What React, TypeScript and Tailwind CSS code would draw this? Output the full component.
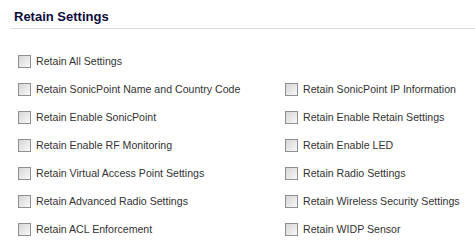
const leftItems = [
  "Retain SonicPoint Name and Country Code",
  "Retain Enable SonicPoint",
  "Retain Enable RF Monitoring",
  "Retain Virtual Access Point Settings",
  "Retain Advanced Radio Settings",
  "Retain ACL Enforcement",
];

const rightItems = [
  "Retain SonicPoint IP Information",
  "Retain Enable Retain Settings",
  "Retain Enable LED",
  "Retain Radio Settings",
  "Retain Wireless Security Settings",
  "Retain WIDP Sensor",
];

function Check({ label }: { label: string }) {
  return (
    <label className="flex items-center h-[28px] gap-[5px]">
      <span className="w-[13px] h-[13px] border border-[#8f8f8f] bg-gradient-to-br from-[#d6d6d6] to-[#f8f8f8] shrink-0" />
      <span className="text-[10.6px] text-[#333333] whitespace-nowrap mt-[1px]">{label}</span>
    </label>
  );
}

export default function App() {
  return (
    <div className="w-[475px] h-[243px] bg-white font-['Liberation_Sans',Arial,sans-serif] overflow-hidden">
      {/* Titre */}
      <div className="pl-[10px] pt-[9px]">
        <div className="pl-[4px] pb-[4px] text-[13px] leading-[15px] font-bold text-[#0b0b3b] border-b border-[#dddddd]">
          Retain Settings
        </div>
      </div>

      {/* Cases à cocher */}
      <div className="pl-[18px] pt-[18px]">
        <Check label="Retain All Settings" />
        <div className="grid grid-cols-[267px_1fr]">
          {leftItems.map((item, i) => (
            <div key={i} className="contents">
              <Check label={item} />
              <Check label={rightItems[i]} />
            </div>
          ))}
        </div>
      </div>
    </div>
  );
}
